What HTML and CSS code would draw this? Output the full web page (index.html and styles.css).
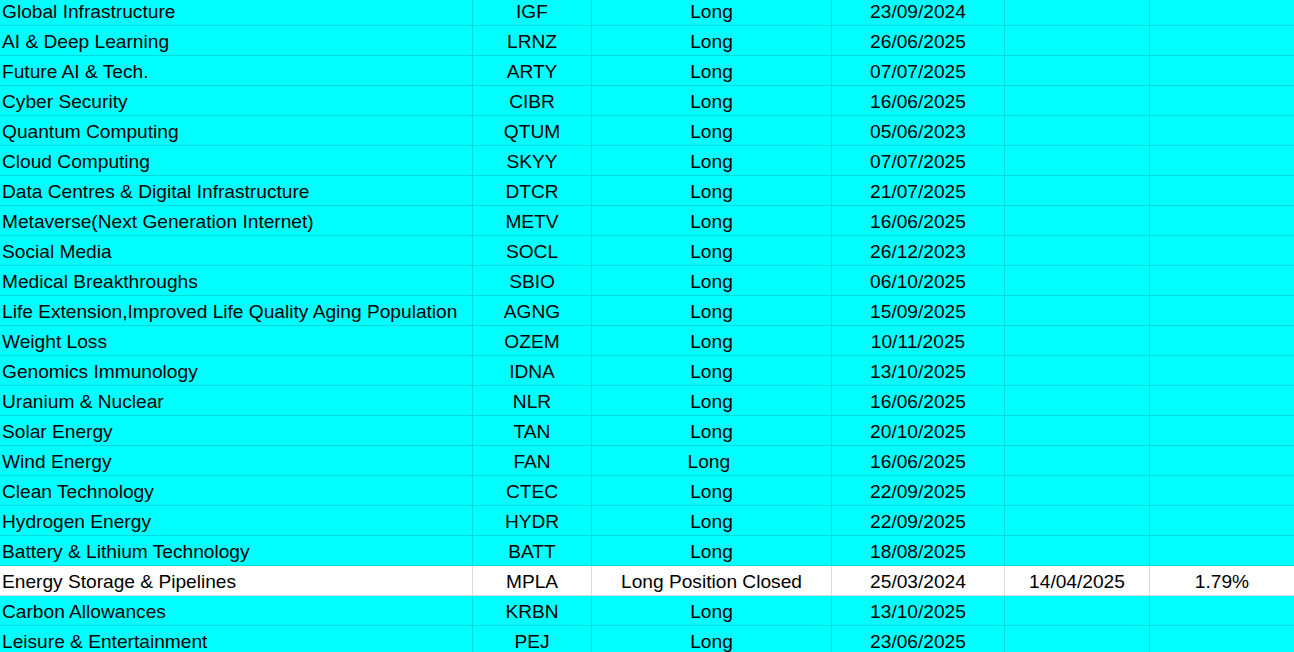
FILE: index.html
```html
<!DOCTYPE html>
<html>
<head>
<meta charset="utf-8">
<link rel="stylesheet" href="styles.css">
</head>
<body>
<div class="sheet">
  <div class="row"><div class="c name">Global Infrastructure</div><div class="c">IGF</div><div class="c">Long</div><div class="c">23/09/2024</div><div class="c"></div><div class="c"></div></div>
  <div class="row"><div class="c name">AI &amp; Deep Learning</div><div class="c">LRNZ</div><div class="c">Long</div><div class="c">26/06/2025</div><div class="c"></div><div class="c"></div></div>
  <div class="row"><div class="c name">Future AI &amp; Tech.</div><div class="c">ARTY</div><div class="c">Long</div><div class="c">07/07/2025</div><div class="c"></div><div class="c"></div></div>
  <div class="row"><div class="c name">Cyber Security</div><div class="c">CIBR</div><div class="c">Long</div><div class="c">16/06/2025</div><div class="c"></div><div class="c"></div></div>
  <div class="row"><div class="c name">Quantum Computing</div><div class="c">QTUM</div><div class="c">Long</div><div class="c">05/06/2023</div><div class="c"></div><div class="c"></div></div>
  <div class="row"><div class="c name">Cloud Computing</div><div class="c">SKYY</div><div class="c">Long</div><div class="c">07/07/2025</div><div class="c"></div><div class="c"></div></div>
  <div class="row"><div class="c name">Data Centres &amp; Digital Infrastructure</div><div class="c">DTCR</div><div class="c">Long</div><div class="c">21/07/2025</div><div class="c"></div><div class="c"></div></div>
  <div class="row"><div class="c name">Metaverse(Next Generation Internet)</div><div class="c">METV</div><div class="c">Long</div><div class="c">16/06/2025</div><div class="c"></div><div class="c"></div></div>
  <div class="row"><div class="c name">Social Media</div><div class="c">SOCL</div><div class="c">Long</div><div class="c">26/12/2023</div><div class="c"></div><div class="c"></div></div>
  <div class="row"><div class="c name">Medical Breakthroughs</div><div class="c">SBIO</div><div class="c">Long</div><div class="c">06/10/2025</div><div class="c"></div><div class="c"></div></div>
  <div class="row"><div class="c name">Life Extension,Improved Life Quality Aging Population</div><div class="c">AGNG</div><div class="c">Long</div><div class="c">15/09/2025</div><div class="c"></div><div class="c"></div></div>
  <div class="row"><div class="c name">Weight Loss</div><div class="c">OZEM</div><div class="c">Long</div><div class="c">10/11/2025</div><div class="c"></div><div class="c"></div></div>
  <div class="row"><div class="c name">Genomics Immunology</div><div class="c">IDNA</div><div class="c">Long</div><div class="c">13/10/2025</div><div class="c"></div><div class="c"></div></div>
  <div class="row"><div class="c name">Uranium &amp; Nuclear</div><div class="c">NLR</div><div class="c">Long</div><div class="c">16/06/2025</div><div class="c"></div><div class="c"></div></div>
  <div class="row"><div class="c name">Solar Energy</div><div class="c">TAN</div><div class="c">Long</div><div class="c">20/10/2025</div><div class="c"></div><div class="c"></div></div>
  <div class="row"><div class="c name">Wind Energy</div><div class="c">FAN</div><div class="c">Long&nbsp;</div><div class="c">16/06/2025</div><div class="c"></div><div class="c"></div></div>
  <div class="row"><div class="c name">Clean Technology</div><div class="c">CTEC</div><div class="c">Long</div><div class="c">22/09/2025</div><div class="c"></div><div class="c"></div></div>
  <div class="row"><div class="c name">Hydrogen Energy</div><div class="c">HYDR</div><div class="c">Long</div><div class="c">22/09/2025</div><div class="c"></div><div class="c"></div></div>
  <div class="row"><div class="c name">Battery &amp; Lithium Technology</div><div class="c">BATT</div><div class="c">Long</div><div class="c">18/08/2025</div><div class="c"></div><div class="c"></div></div>
  <div class="row closed"><div class="c name">Energy Storage &amp; Pipelines</div><div class="c">MPLA</div><div class="c">Long Position Closed</div><div class="c">25/03/2024</div><div class="c">14/04/2025</div><div class="c">1.79%</div></div>
  <div class="row"><div class="c name">Carbon Allowances</div><div class="c">KRBN</div><div class="c">Long</div><div class="c">13/10/2025</div><div class="c"></div><div class="c"></div></div>
  <div class="row"><div class="c name">Leisure &amp; Entertainment</div><div class="c">PEJ</div><div class="c">Long</div><div class="c">23/06/2025</div><div class="c"></div><div class="c"></div></div>
</div>
</body>
</html>
```
FILE: styles.css
```css
html, body {
  margin: 0;
  padding: 0;
  background: #00ffff;
  overflow: hidden;
}
.sheet {
  margin-top: -4px;
  font-family: "Liberation Sans", Arial, sans-serif;
  font-size: 19.15px;
  color: #000;
}
.row {
  display: grid;
  grid-template-columns: 473px 119px 240px 173px 145px 1fr;
  background: #00ffff;
}
.c {
  box-sizing: border-box;
  height: 30px;
  line-height: 29px;
  padding-top: 1px;
  border-right: 1px solid #00dcdc;
  border-bottom: 1px solid #00dcdc;
  text-align: center;
  white-space: nowrap;
  overflow: hidden;
}
.c:last-child {
  border-right: none;
}
.c.name {
  text-align: left;
  padding-left: 2px;
}
.row.closed {
  background: #ffffff;
}
.row.closed .c {
  border-right-color: #dadada;
  border-bottom-color: #dadada;
}
```
